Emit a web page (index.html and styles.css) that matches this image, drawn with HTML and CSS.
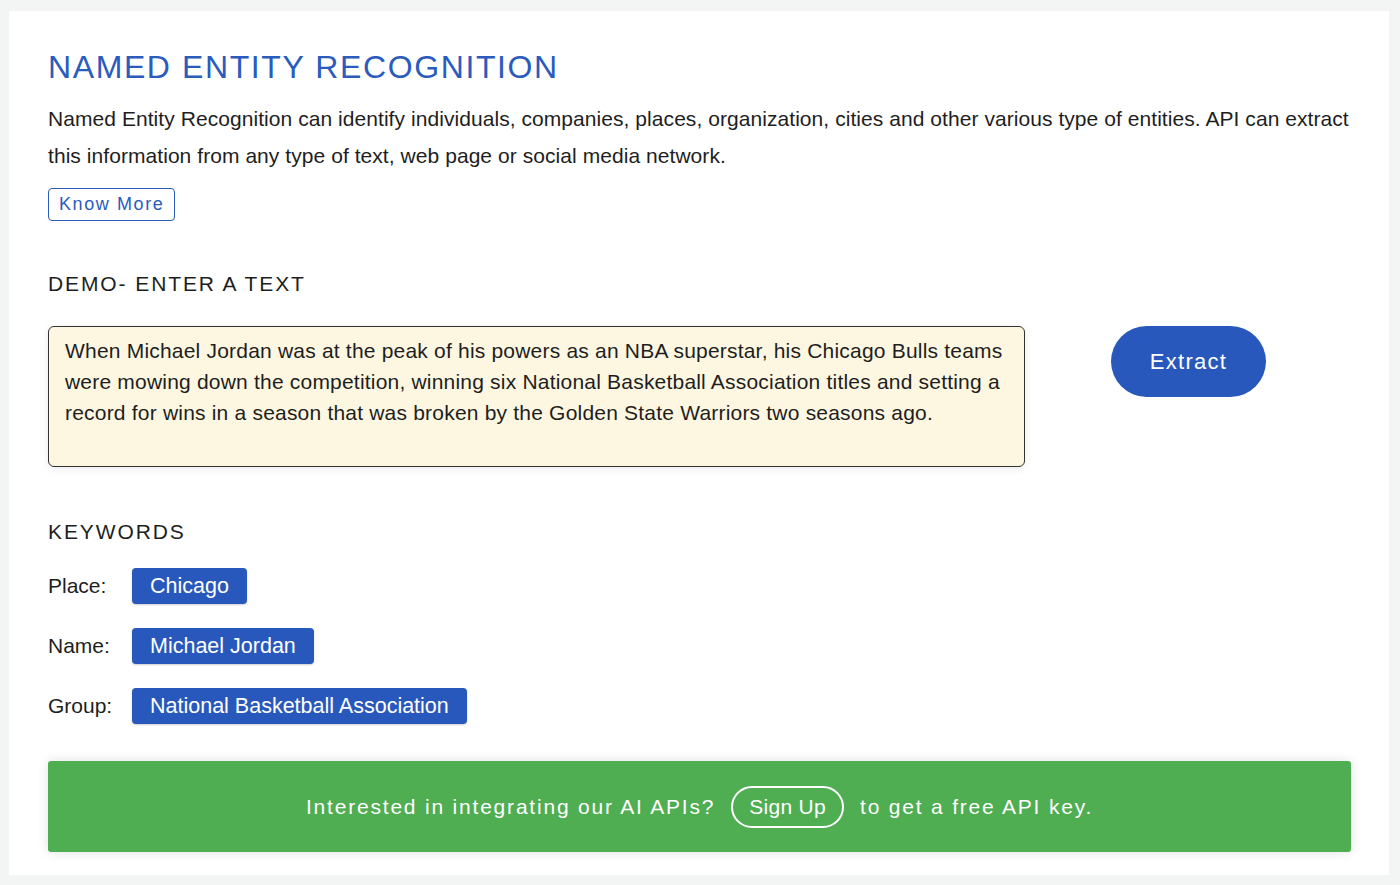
FILE: index.html
```html
<!DOCTYPE html>
<html>
<head>
<meta charset="utf-8">
<link rel="stylesheet" href="styles.css">
</head>
<body>
<div class="card">
  <h1 class="title">NAMED ENTITY RECOGNITION</h1>
  <p class="intro">Named Entity Recognition can identify individuals, companies, places, organization, cities and other various type of entities. API can extract this information from any type of text, web page or social media network.</p>
  <a class="know-more" href="#">Know More</a>

  <h2 class="section-title demo-title">DEMO- ENTER A TEXT</h2>
  <div class="demo-row">
    <div class="text-box">When Michael Jordan was at the peak of his powers as an NBA superstar, his Chicago Bulls teams were mowing down the competition, winning six National Basketball Association titles and setting a record for wins in a season that was broken by the Golden State Warriors two seasons ago.</div>
    <button class="extract">Extract</button>
  </div>

  <h2 class="section-title kw-title">KEYWORDS</h2>
  <div class="kw-list">
    <div class="kw-row"><span class="kw-label">Place:</span><span class="chip">Chicago</span></div>
    <div class="kw-row"><span class="kw-label">Name:</span><span class="chip">Michael Jordan</span></div>
    <div class="kw-row"><span class="kw-label">Group:</span><span class="chip">National Basketball Association</span></div>
  </div>

  <div class="banner">
    <span>Interested in integrating our AI APIs?</span>
    <a class="signup" href="#">Sign Up</a>
    <span>to get a free API key.</span>
  </div>
</div>
</body>
</html>
```

FILE: styles.css
```css
* { box-sizing: border-box; }
html, body { margin: 0; padding: 0; }
body {
  background: #f3f5f5;
  font-family: "Liberation Sans", Arial, sans-serif;
  color: #1e1e1e;
  padding: 11px 11px 10px 9px;
}
.card {
  background: #fff;
  padding: 36px 38px 23px 39px;
  min-height: 864px;
}
.title {
  margin: 0;
  font-weight: 400;
  font-size: 32px;
  letter-spacing: 1.6px;
  color: #2a5bbd;
  line-height: 40px;
}
.intro {
  margin: 13px 0 0;
  font-size: 21px;
  letter-spacing: 0.06px;
  line-height: 37px;
  color: #1e1e1e;
}
.know-more {
  display: inline-block;
  margin-top: 14px;
  height: 33px;
  padding: 0 10px;
  border: 1px solid #2a5bbd;
  border-radius: 4px;
  color: #2a5bbd;
  text-decoration: none;
  font-size: 18px;
  letter-spacing: 1.6px;
  line-height: 31px;
}
.section-title {
  margin: 0;
  font-weight: 400;
  font-size: 21px;
  letter-spacing: 1.9px;
  line-height: 24px;
  color: #1e1e1e;
}
.demo-title { margin-top: 51px; }
.demo-row {
  display: flex;
  align-items: flex-start;
  margin-top: 30px;
}
.text-box {
  width: 977px;
  height: 141px;
  background: #fdf7e1;
  border: 1px solid #333;
  border-radius: 6px;
  padding: 8px 16px;
  font-size: 21px;
  letter-spacing: 0.2px;
  line-height: 31px;
  color: #1e1e1e;
  box-shadow: 0 2px 10px rgba(0,0,0,0.08);
}
.extract {
  margin-left: 86px;
  width: 155px;
  height: 71px;
  border: none;
  border-radius: 36px;
  background: #2858bb;
  color: #fff;
  font-family: "Liberation Sans", Arial, sans-serif;
  font-size: 22px;
  letter-spacing: 1.3px;
}
.kw-title { margin-top: 53px; }
.kw-list {
  display: flex;
  flex-direction: column;
  gap: 24px;
  margin-top: 24px;
}
.kw-row {
  display: flex;
  align-items: center;
  height: 36px;
}
.kw-label {
  width: 84px;
  font-size: 21px;
}
.chip {
  display: inline-block;
  height: 36px;
  padding: 0 18px;
  background: #2858bb;
  color: #fff;
  border-radius: 4px;
  font-size: 21.5px;
  line-height: 36px;
  box-shadow: 0 1px 2px rgba(0,0,0,0.2);
}
.banner {
  margin-top: 37px;
  height: 91px;
  background: #4fad52;
  border-radius: 3px;
  box-shadow: 0 0 12px rgba(0,0,0,0.12);
  display: flex;
  align-items: center;
  justify-content: center;
  gap: 16px;
  color: #fff;
  font-size: 21px;
  letter-spacing: 1.8px;
}
.signup {
  display: inline-block;
  height: 42px;
  padding: 0 16px;
  border: 2px solid #fff;
  border-radius: 21px;
  color: #fff;
  text-decoration: none;
  line-height: 38px;
  letter-spacing: 0.3px;
}
```
